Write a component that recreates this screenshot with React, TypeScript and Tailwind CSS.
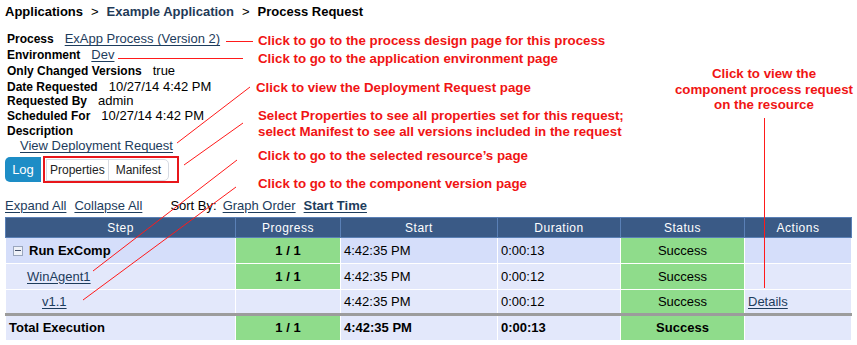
import React from "react";

const link = "text-[#1d3c5c] underline underline-offset-2";

const Detail = ({ label, children, h = "h-[15px]" }: { label: string; children?: React.ReactNode; h?: string }) => (
  <div className={`flex items-center gap-[11px] ${h}`}>
    <span className="text-[12px] font-bold">{label}</span>
    {children}
  </div>
);

const Minus = () => (
  <span className="inline-flex w-[10px] h-[10px] mr-[6px] border border-[#9aa6bd] bg-[#eef1f8] items-center justify-center">
    <span className="w-[6px] h-[1px] bg-[#44506a]" />
  </span>
);

const green = "bg-[#8fdc8b]";
const note = "absolute text-[#f01414] text-[13.3px] font-bold whitespace-nowrap";

export default function App() {
  return (
    <div className="relative w-[857px] h-[345px] bg-white text-black overflow-hidden" style={{ fontFamily: '"Liberation Sans", Arial, sans-serif' }}>
      {/* breadcrumb */}
      <div className="h-[24px] pl-[5px] flex items-center gap-[8px] text-[13px] font-bold">
        <span>Applications</span>
        <span className="font-normal">&gt;</span>
        <span className="text-[#1f3a57]">Example Application</span>
        <span className="font-normal">&gt;</span>
        <span>Process Request</span>
      </div>

      {/* details */}
      <div className="pl-[7px] pt-[7px] text-[13px]">
        <Detail label="Process" h="h-[16px]">
          <span className={link}>ExApp Process (Version 2)</span>
        </Detail>
        <Detail label="Environment" h="h-[16px]">
          <span className={link}>Dev</span>
        </Detail>
        <Detail label="Only Changed Versions" h="h-[16px]">true</Detail>
        <Detail label="Date Requested">10/27/14 4:42 PM</Detail>
        <Detail label="Requested By" h="h-[14px]">admin</Detail>
        <Detail label="Scheduled For">10/27/14 4:42 PM</Detail>
        <Detail label="Description" />
        <div className="h-[16px] pl-[13px] flex items-center">
          <span className={link}>View Deployment Request</span>
        </div>
      </div>

      {/* tabs */}
      <div className="pl-[5px] pt-[2px] flex items-center gap-[2px] text-[12px]">
        <div className="w-[36px] h-[25px] rounded-l-[5px] bg-[#1d8dc6] text-white text-[13px] flex items-center justify-center">Log</div>
        <div className="h-[27px] border-2 border-[#e8161b] flex items-center pl-[1px] pr-[8px]">
          <div className="flex h-[22px] border border-[#d7dbe3] rounded-r-[5px] text-[#222]">
            <span className="px-[3px] flex items-center border-r border-[#d7dbe3]">Properties</span>
            <span className="px-[7px] flex items-center">Manifest</span>
          </div>
        </div>
      </div>

      {/* sort bar */}
      <div className="pl-[5px] pt-[12px] h-[33px] flex items-center text-[13px]">
        <span className={link}>Expand All</span>
        <span className={`${link} ml-[8px]`}>Collapse All</span>
        <span className="ml-[28px]">Sort By:</span>
        <span className={`${link} ml-[6px]`}>Graph Order</span>
        <span className={`${link} ml-[8px] font-bold`}>Start Time</span>
      </div>

      {/* table */}
      <div className="px-[5px] pt-[1px]">
        <table className="w-[847px] border-collapse border border-[#a9b7cc] text-[13px]">
          <thead>
            <tr className="h-[20px] bg-[#3a5a86] text-white text-[12px] tracking-[0.5px]">
              <th className="w-[230px] font-normal border border-[#5a80b6]">Step</th>
              <th className="w-[105px] font-normal border border-[#5a80b6]">Progress</th>
              <th className="w-[157px] font-normal border border-[#5a80b6]">Start</th>
              <th className="w-[123px] font-normal border border-[#5a80b6]">Duration</th>
              <th className="w-[124px] font-normal border border-[#5a80b6]">Status</th>
              <th className="font-normal border border-[#5a80b6]">Actions</th>
            </tr>
          </thead>
          <tbody>
            <tr className="h-[26px] bg-[#d5defa]">
              <td className="border border-white pl-[7px] font-bold">
                <span className="flex items-center"><Minus />Run ExComp</span>
              </td>
              <td className={`border border-white ${green} text-center font-bold`}>1 / 1</td>
              <td className="border border-white pl-[3px]">4:42:35 PM</td>
              <td className="border border-white pl-[3px]">0:00:13</td>
              <td className={`border border-white ${green} text-center`}>Success</td>
              <td className="border border-white" />
            </tr>
            <tr className="h-[26px] bg-[#e3e8fb]">
              <td className="border border-white pl-[21px]"><span className={link}>WinAgent1</span></td>
              <td className={`border border-white ${green} text-center font-bold`}>1 / 1</td>
              <td className="border border-white pl-[3px]">4:42:35 PM</td>
              <td className="border border-white pl-[3px]">0:00:12</td>
              <td className={`border border-white ${green} text-center`}>Success</td>
              <td className="border border-white" />
            </tr>
            <tr className="h-[25px] bg-[#e3e8fb] border-b-[3px] border-b-[#9c9c9c]">
              <td className="border border-white border-b-[#9c9c9c] pl-[36px]"><span className={link}>v1.1</span></td>
              <td className="border border-white border-b-[#9c9c9c]" />
              <td className="border border-white border-b-[#9c9c9c] pl-[3px]">4:42:35 PM</td>
              <td className="border border-white border-b-[#9c9c9c] pl-[3px]">0:00:12</td>
              <td className={`border border-white border-b-[#9c9c9c] ${green} text-center`}>Success</td>
              <td className="border border-white border-b-[#9c9c9c] pl-[3px]"><span className={link}>Details</span></td>
            </tr>
            <tr className="h-[26px] bg-[#e3e8fb] font-bold">
              <td className="border border-white pl-[3px]">Total Execution</td>
              <td className={`border border-white ${green} text-center`}>1 / 1</td>
              <td className="border border-white pl-[3px]">4:42:35 PM</td>
              <td className="border border-white pl-[3px]">0:00:13</td>
              <td className={`border border-white ${green} text-center`}>Success</td>
              <td className="border border-white" />
            </tr>
          </tbody>
        </table>
      </div>

      {/* callout lines */}
      <svg className="absolute inset-0 pointer-events-none" width="857" height="345">
        <g stroke="#ff1a1a" strokeWidth="1" fill="none">
          <line x1="226" y1="41.5" x2="253" y2="41.5" />
          <line x1="118" y1="58.5" x2="243" y2="58.5" />
          <line x1="177" y1="143" x2="250" y2="87" />
          <line x1="184" y1="165" x2="243" y2="123" />
          <line x1="93" y1="271" x2="237" y2="160" />
          <line x1="83" y1="300" x2="236" y2="187" />
          <line x1="764.5" y1="118" x2="764.5" y2="288" />
        </g>
      </svg>

      {/* callout text */}
      <div className={`${note} left-[258px] top-[33px] leading-[15px]`}>
        Click to go to the process design page for this process
      </div>
      <div className={`${note} left-[258px] top-[51px] leading-[15px]`}>
        Click to go to the application environment page
      </div>
      <div className={`${note} left-[256px] top-[80px] leading-[15px]`}>
        Click to view the Deployment Request page
      </div>
      <div className={`${note} left-[258px] top-[108px] leading-[16px]`}>
        Select Properties to see all properties set for this request;
        <br />
        select Manifest to see all versions included in the request
      </div>
      <div className={`${note} left-[258px] top-[148px] leading-[15px]`}>
        Click to go to the selected resource’s page
      </div>
      <div className={`${note} left-[258px] top-[176px] leading-[15px]`}>
        Click to go to the component version page
      </div>
      <div className={`${note} left-[668px] top-[66px] w-[192px] text-center leading-[15.5px]`}>
        Click to view the
        <br />
        component process request
        <br />
        on the resource
      </div>
    </div>
  );
}
